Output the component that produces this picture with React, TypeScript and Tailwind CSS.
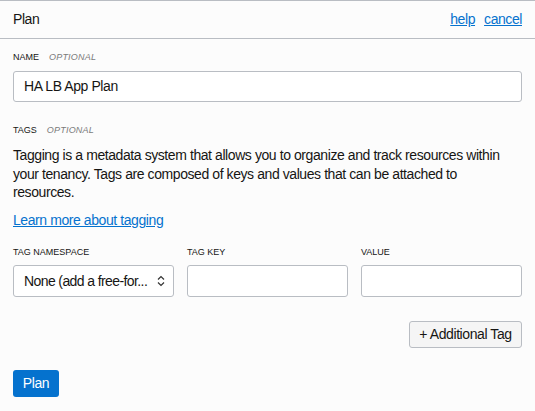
import React from "react";

const Label: React.FC<{ text: string; optional?: boolean }> = ({ text, optional }) => (
  <div className="flex items-center h-[12px] text-[9px] leading-[12px] tracking-normal text-[#161513]">
    <span>{text}</span>
    {optional && <span className="ml-[10px] italic tracking-[0.2px] text-[#7a7a7a]">OPTIONAL</span>}
  </div>
);

const App: React.FC = () => {
  return (
    <div className="w-[535px] h-[411px] bg-[#fcfcfc] text-[14px] tracking-[-0.42px] text-[#161513] font-['Liberation_Sans',Arial,sans-serif]">
      <div className="h-[39px] border-t border-b border-[#b9bdc3] flex items-center justify-between pl-[13px] pr-[13px]">
        <span>Plan</span>
        <div className="flex gap-[9px] text-[#0572ce]">
          <a className="underline cursor-pointer">help</a>
          <a className="underline cursor-pointer">cancel</a>
        </div>
      </div>

      <div className="px-[13px]">
        <div className="mt-[12px]">
          <Label text="NAME" optional />
        </div>
        <div className="mt-[8px] h-[31px] border border-[#b9bdc3] rounded-[3px] bg-white flex items-center px-[10px]">
          HA LB App Plan
        </div>

        <div className="mt-[22px]">
          <Label text="TAGS" optional />
        </div>
        <p className="mt-[10px] leading-[18.6px] pr-[16px]">
          Tagging is a metadata system that allows you to organize and track resources within your tenancy. Tags are
          composed of keys and values that can be attached to resources.
        </p>
        <a className="block mt-[9px] leading-[18.6px] text-[#0572ce] underline cursor-pointer">
          Learn more about tagging
        </a>

        <div className="mt-[17px] grid grid-cols-3 gap-x-[13px]">
          <Label text="TAG NAMESPACE" />
          <Label text="TAG KEY" />
          <Label text="VALUE" />
          <div className="mt-[7px] h-[32px] border border-[#b9bdc3] rounded-[3px] bg-white flex items-center justify-between pl-[10px] pr-[8px]">
            <span className="whitespace-nowrap tracking-[-0.6px]">None (add a free-for...</span>
            <svg width="8" height="12" viewBox="0 0 8 12" fill="none" stroke="#333" strokeWidth="1.2">
              <path d="M1 4.5 L4 1.5 L7 4.5" />
              <path d="M1 7.5 L4 10.5 L7 7.5" />
            </svg>
          </div>
          <div className="mt-[7px] h-[32px] border border-[#b9bdc3] rounded-[3px] bg-white" />
          <div className="mt-[7px] h-[32px] border border-[#b9bdc3] rounded-[3px] bg-white" />
        </div>

        <div className="mt-[24px] flex justify-end">
          <button className="h-[27px] w-[113px] border border-[#b9bdc3] rounded-[3px] bg-[#f5f5f5] text-[14px] text-[#161513]">
            + Additional Tag
          </button>
        </div>

        <button className="mt-[22px] h-[27px] w-[46px] rounded-[3px] bg-[#0572ce] text-white text-[14px]">
          Plan
        </button>
      </div>
    </div>
  );
};

export default App;
